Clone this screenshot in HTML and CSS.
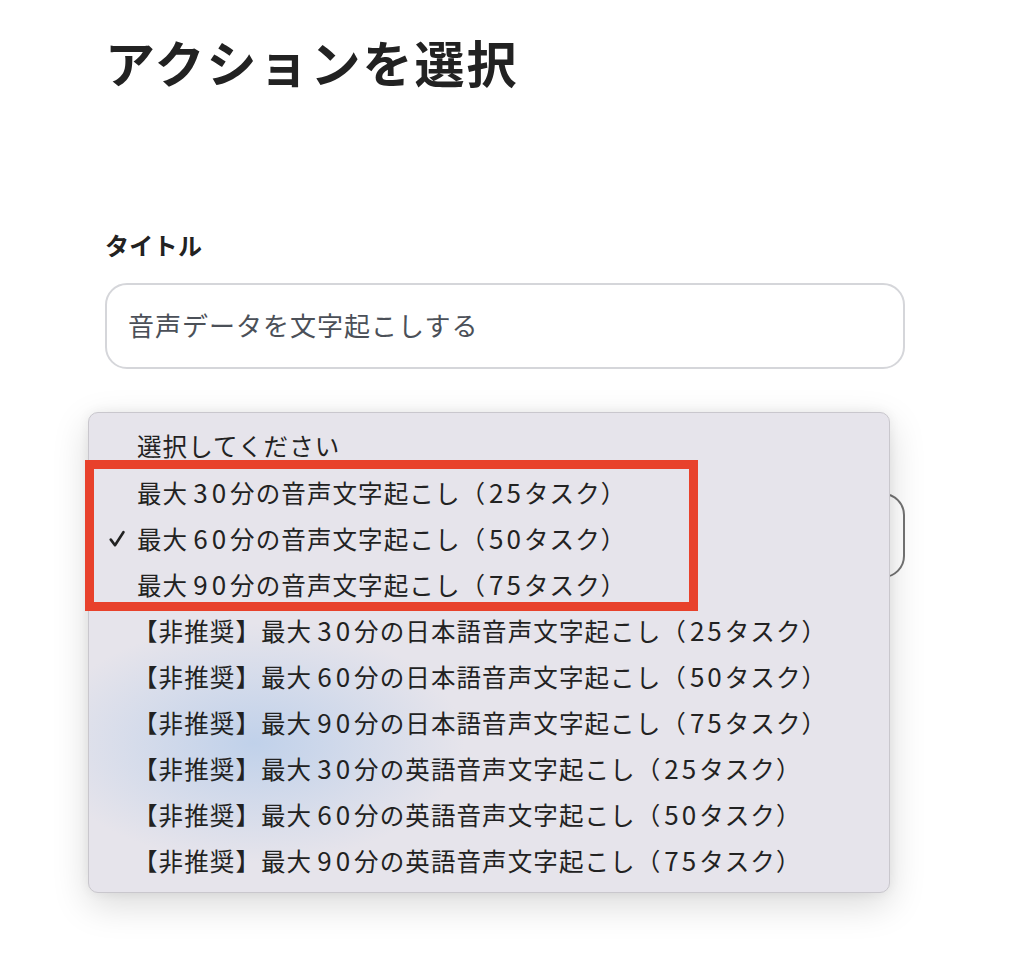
FILE: index.html
```html
<!DOCTYPE html>
<html lang="ja">
<head>
<meta charset="utf-8">
<title>アクションを選択</title>
<link rel="stylesheet" href="styles.css">
</head>
<body>
<main class="page">
  <h1 class="title">アクションを選択</h1>
  <section class="field field-title">
    <label class="label">タイトル</label>
    <div class="input">音声データを文字起こしする</div>
  </section>
  <section class="field field-action">
    <div class="select"></div>
  </section>
</main>

<div class="menu">
  <ul class="menu-list">
    <li class="item">選択してください</li>
    <li class="item">最大<span class="num">30</span>分の音声文字起こし（<span class="num n2">25</span>タスク）</li>
    <li class="item checked"><svg class="check" viewBox="0 0 16 18" width="16" height="18"><path d="M1.8 9.6 L6 15.2 L14.4 2.2" fill="none" stroke="#222" stroke-width="2.6" stroke-linecap="round" stroke-linejoin="round"/></svg>最大<span class="num">60</span>分の音声文字起こし（<span class="num n2">50</span>タスク）</li>
    <li class="item">最大<span class="num">90</span>分の音声文字起こし（<span class="num n2">75</span>タスク）</li>
    <li class="item dep">【非推奨】最大<span class="num">30</span>分の日本語音声文字起こし（<span class="num n2">25</span>タスク）</li>
    <li class="item dep">【非推奨】最大<span class="num">60</span>分の日本語音声文字起こし（<span class="num n2">50</span>タスク）</li>
    <li class="item dep">【非推奨】最大<span class="num">90</span>分の日本語音声文字起こし（<span class="num n2">75</span>タスク）</li>
    <li class="item dep">【非推奨】最大<span class="num">30</span>分の英語音声文字起こし（<span class="num n2">25</span>タスク）</li>
    <li class="item dep">【非推奨】最大<span class="num">60</span>分の英語音声文字起こし（<span class="num n2">50</span>タスク）</li>
    <li class="item dep">【非推奨】最大<span class="num">90</span>分の英語音声文字起こし（<span class="num n2">75</span>タスク）</li>
  </ul>
</div>
<div class="highlight"></div>
</body>
</html>
```

FILE: styles.css
```css
html, body {
  margin: 0;
  padding: 0;
  background: #ffffff;
}
body {
  width: 1029px;
  height: 959px;
  overflow: hidden;
  position: relative;
  font-family: "Noto Sans CJK JP", "Noto Sans", sans-serif;
  color: #222222;
}
.page {
  padding: 31px 0 0 105px;
  width: 800px;
  display: flex;
  flex-direction: column;
}
.title {
  margin: 0;
  font-size: 50px;
  line-height: 60px;
  font-weight: 700;
  letter-spacing: 2px;
  color: #222222;
}
.field {
  display: flex;
  flex-direction: column;
}
.field-title {
  margin-top: 138px;
  gap: 22px;
}
.field-action {
  margin-top: 124px;
}
.label {
  font-size: 24px;
  line-height: 32px;
  font-weight: 700;
  letter-spacing: 0.3px;
  color: #222222;
}
.input {
  box-sizing: border-box;
  height: 86px;
  border: 2px solid #d5d6da;
  border-radius: 22px;
  padding: 0 21px 4px 21px;
  display: flex;
  align-items: center;
  font-size: 26px;
  color: #4b5058;
  letter-spacing: 1px;
}
.select {
  box-sizing: border-box;
  height: 85px;
  border: 2px solid #737373;
  border-radius: 22px;
}
.menu {
  position: absolute;
  left: 88px;
  top: 412px;
  width: 802px;
  height: 481px;
  box-sizing: border-box;
  border: 1px solid #c9c7cd;
  border-radius: 10px;
  background:
    radial-gradient(ellipse 210px 120px at 165px 330px, rgba(190, 208, 234, 0.95), rgba(190, 208, 234, 0) 100%),
    #e6e4eb;
  box-shadow: 0 12px 36px rgba(0, 0, 0, 0.15), 0 0 12px rgba(0, 0, 0, 0.06);
  overflow: hidden;
}
.menu-list {
  list-style: none;
  margin: 0;
  padding: 10px 0 0 0;
}
.item {
  position: relative;
  height: 46px;
  line-height: 46px;
  padding-left: 48px;
  font-size: 24.5px;
  letter-spacing: 1.1px;
  color: #222222;
  white-space: nowrap;
}
.item.dep {
  padding-left: 44px;
}
.num {
  font-size: 26px;
  letter-spacing: 4px;
  margin-left: 5px;
}
.num.n2 {
  margin-left: 3px;
  letter-spacing: 3px;
}
.check {
  position: absolute;
  left: 20px;
  top: 15px;
}
.highlight {
  position: absolute;
  left: 85px;
  top: 460px;
  width: 613px;
  height: 151px;
  box-sizing: border-box;
  border: 9px solid #e8412b;
}
```
